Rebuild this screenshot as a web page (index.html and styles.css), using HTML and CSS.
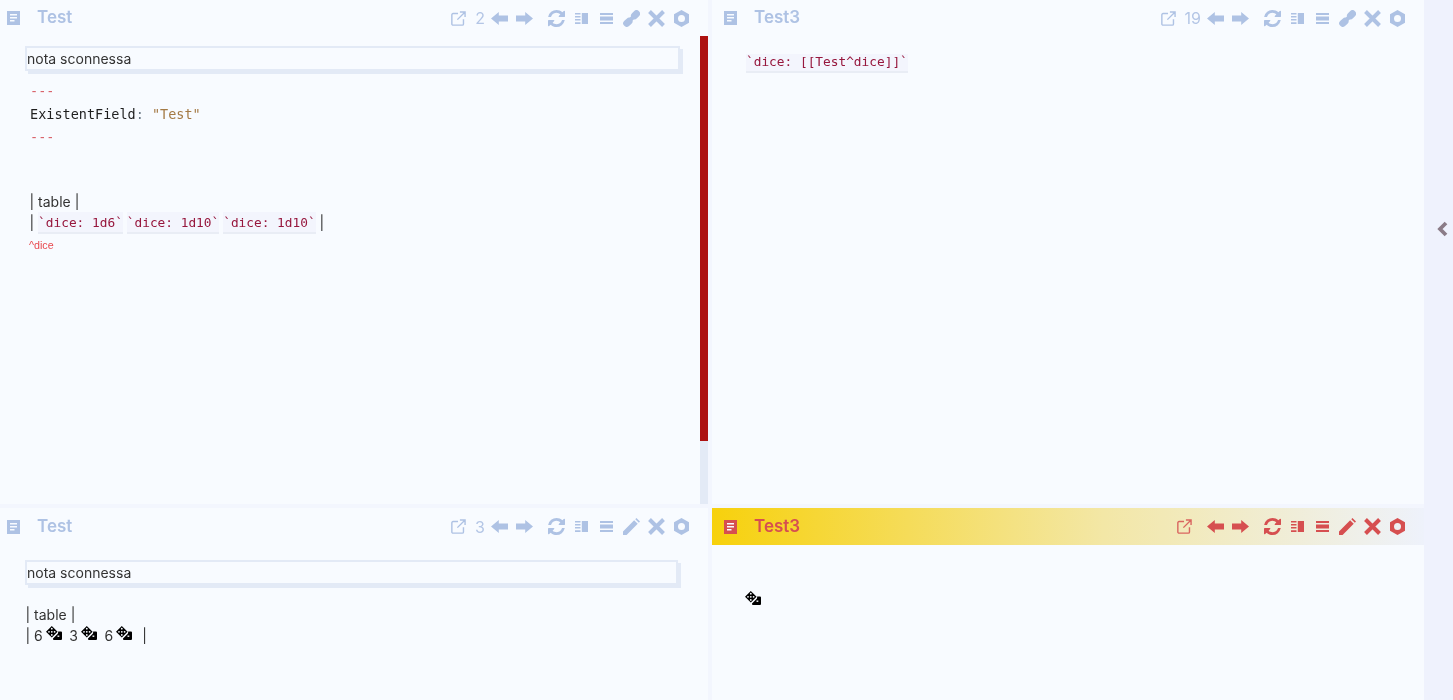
FILE: index.html
```html
<!DOCTYPE html>
<html lang="it">
<head>
<meta charset="utf-8">
<title>Test</title>
<link rel="stylesheet" href="styles.css">
</head>
<body>
<svg class="defs" aria-hidden="true">
  <symbol id="i-doc" viewBox="0 0 13 14">
    <path fill="currentColor" d="M0 0h13v14H0z"/>
    <path class="doc-lines" d="M3 3h7v1.4H3zM3 6h7v1.4H3zM3 9h4.500v1.400H3z"/>
  </symbol>
  <symbol id="i-ext" viewBox="0 0 16 16">
    <path fill="none" stroke="currentColor" stroke-width="1.500" d="M7.500 2.700H2.200a1.300 1.300 0 0 0-1.300 1.300v9.800a1.300 1.300 0 0 0 1.300 1.300H12a1.300 1.300 0 0 0 1.300-1.300V8.800M9.500 1H15v5.500M15 1 6.800 9.200"/>
  </symbol>
  <symbol id="i-left" viewBox="0 0 17 13"><path fill="currentColor" d="M0 6.500 7.800 0v3.500H17v6H7.800V13z"/></symbol>
  <symbol id="i-right" viewBox="0 0 17 13"><path fill="currentColor" d="M17 6.500 9.200 0v3.500H0v6h9.200V13z"/></symbol>
  <symbol id="i-refresh" viewBox="128 128 1536 1536">
    <path fill="currentColor" d="M1639 1056q0 5-1 7-64 268-268 434.500t-478 166.500q-146 0-282.500-55t-243.500-157l-129 129q-19 19-45 19t-45-19-19-45v-448q0-26 19-45t45-19h448q26 0 45 19t19 45-19 45l-137 137q71 66 161 102t187 36q134 0 250-65t186-179q11-17 53-117 8-23 30-23h192q13 0 22.500 9.500t9.500 22.500zm25-800v448q0 26-19 45t-45 19h-448q-26 0-45-19t-19-45 19-45l138-138q-148-137-349-137-134 0-250 65t-186 179q-11 17-53 117-8 23-30 23h-199q-13 0-22.500-9.500t-9.500-22.500v-7q65-268 270-434.500t480-166.500q146 0 284 55.500t245 156.500l130-129q19-19 45-19t45 19 19 45z"/>
  </symbol>
  <symbol id="i-cols" viewBox="0 0 13 11">
    <path fill="currentColor" d="M0 0h5.500v1.600H0zM0 3h5.500v1.600H0zM0 6h5.500v1.600H0zM0 9.200h5.500V11H0zM6.800 0H13v11H6.800z"/>
  </symbol>
  <symbol id="i-rows" viewBox="0 0 13 11">
    <path fill="currentColor" d="M0 0h13v2H0zM0 3.400h13v4H0zM0 9h13v2H0z"/>
  </symbol>
  <symbol id="i-link" viewBox="0 0 17 17">
    <path fill="none" stroke="currentColor" stroke-width="7" stroke-linecap="round" d="M3.700 13.300 6 11.300M11.500 5.700 13.500 3.700"/>
    <path fill="none" stroke="currentColor" stroke-width="4" d="M5 12 12.500 5"/>
  </symbol>
  <symbol id="i-pen" viewBox="0 0 18 18">
    <path fill="currentColor" d="M0 18v-3.800L11.800 2.400l3.800 3.800L3.800 18zM13 1.200 14.200 0 18 3.800l-1.200 1.200z"/>
  </symbol>
  <symbol id="i-x" viewBox="0 0 17 17">
    <path fill="none" stroke="currentColor" stroke-width="4" d="M1.500 1.500 15.500 15.500M15.500 1.500 1.500 15.500"/>
  </symbol>
  <symbol id="i-hex" viewBox="0 0 15 17">
    <path fill="currentColor" fill-rule="evenodd" d="M7.500 0 15 4.200v8.600L7.500 17 0 12.800V4.200zM7.500 5a3.500 3.500 0 1 0 0 7 3.500 3.500 0 0 0 0-7z"/>
  </symbol>
  <symbol id="i-dice" viewBox="0 0 16 14">
    <path fill="#000" fill-rule="evenodd" d="M5.800 0 11.600 5.800 5.800 11.600 0 5.800zM5.800 1.800a.9.9 0 1 0 0 1.800.9.9 0 0 0 0-1.800zM3 4.900a.9.9 0 1 0 0 1.800.9.9 0 0 0 0-1.800zM5.800 4.900a.9.9 0 1 0 0 1.800.9.9 0 0 0 0-1.800zM8.600 4.900a.9.9 0 1 0 0 1.800.9.9 0 0 0 0-1.800zM5.800 8a.9.9 0 1 0 0 1.800.9.9 0 0 0 0-1.800z"/>
    <path fill="#000" fill-rule="evenodd" d="M12.200 5.500H15a1 1 0 0 1 1 1V13a1 1 0 0 1-1 1H8a1 1 0 0 1-1-1v-.600L12 7.500z"/>
    <path fill="#f9fbff" d="M11.500 9.500h1.800v1.400h-1.800z"/>
  </symbol>
</svg>

<div class="app">
  <main class="panes">

    <section class="pane pane-short">
      <header class="head head-short">
        <svg class="doc"><use href="#i-doc"/></svg>
        <span class="title">Test</span>
        <div class="tools">
          <svg class="ext"><use href="#i-ext"/></svg>
          <span class="count">2</span>
          <span class="slot"><svg class="ic-arrow"><use href="#i-left"/></svg></span>
          <span class="slot"><svg class="ic-arrow"><use href="#i-right"/></svg></span>
          <span class="slot slot-gap"><svg class="ic-refresh"><use href="#i-refresh"/></svg></span>
          <span class="slot"><svg class="ic-bars"><use href="#i-cols"/></svg></span>
          <span class="slot"><svg class="ic-bars"><use href="#i-rows"/></svg></span>
          <span class="slot"><svg class="ic-big"><use href="#i-link"/></svg></span>
          <span class="slot"><svg class="ic-big"><use href="#i-x"/></svg></span>
          <span class="slot"><svg class="ic-hex"><use href="#i-hex"/></svg></span>
        </div>
      </header>
      <div class="body body-scroll">
        <div class="content">
          <div class="embed embed-top">nota sconnessa</div>
          <div class="front">
            <div class="mono-line red">---</div>
            <div class="mono-line">ExistentField<span class="colon">:</span> <span class="str">"Test"</span></div>
            <div class="mono-line red">---</div>
          </div>
          <div class="md-table md-table-top">
            <div class="tline">| table |</div>
            <div class="tline">| <code class="code">`dice: 1d6`</code> <code class="code">`dice: 1d10`</code> <code class="code">`dice: 1d10`</code> |</div>
          </div>
          <div class="blockid">^dice</div>
        </div>
        <div class="scrollbar"><div class="thumb"></div></div>
      </div>
    </section>

    <section class="pane pane-short">
      <header class="head head-short head-right">
        <svg class="doc"><use href="#i-doc"/></svg>
        <span class="title">Test3</span>
        <div class="tools">
          <svg class="ext"><use href="#i-ext"/></svg>
          <span class="count">19</span>
          <span class="slot"><svg class="ic-arrow"><use href="#i-left"/></svg></span>
          <span class="slot"><svg class="ic-arrow"><use href="#i-right"/></svg></span>
          <span class="slot slot-gap"><svg class="ic-refresh"><use href="#i-refresh"/></svg></span>
          <span class="slot"><svg class="ic-bars"><use href="#i-cols"/></svg></span>
          <span class="slot"><svg class="ic-bars"><use href="#i-rows"/></svg></span>
          <span class="slot"><svg class="ic-big"><use href="#i-link"/></svg></span>
          <span class="slot"><svg class="ic-big"><use href="#i-x"/></svg></span>
          <span class="slot"><svg class="ic-hex"><use href="#i-hex"/></svg></span>
        </div>
      </header>
      <div class="body body-right">
        <code class="code code-solo">`dice: [[Test^dice]]`</code>
      </div>
    </section>

    <section class="pane">
      <header class="head">
        <svg class="doc"><use href="#i-doc"/></svg>
        <span class="title">Test</span>
        <div class="tools">
          <svg class="ext"><use href="#i-ext"/></svg>
          <span class="count">3</span>
          <span class="slot"><svg class="ic-arrow"><use href="#i-left"/></svg></span>
          <span class="slot"><svg class="ic-arrow"><use href="#i-right"/></svg></span>
          <span class="slot slot-gap"><svg class="ic-refresh"><use href="#i-refresh"/></svg></span>
          <span class="slot"><svg class="ic-bars"><use href="#i-cols"/></svg></span>
          <span class="slot"><svg class="ic-bars"><use href="#i-rows"/></svg></span>
          <span class="slot"><svg class="ic-big"><use href="#i-pen"/></svg></span>
          <span class="slot"><svg class="ic-big"><use href="#i-x"/></svg></span>
          <span class="slot"><svg class="ic-hex"><use href="#i-hex"/></svg></span>
        </div>
      </header>
      <div class="body">
        <div class="embed embed-bottom">nota sconnessa</div>
        <div class="md-table md-table-bottom">
          <div class="tline">| table |</div>
          <div class="tline">| 6 <svg class="dice"><use href="#i-dice"/></svg> 3 <svg class="dice"><use href="#i-dice"/></svg> 6 <svg class="dice dice-end"><use href="#i-dice"/></svg> |</div>
        </div>
      </div>
    </section>

    <section class="pane pane-active">
      <header class="head head-right head-active">
        <svg class="doc"><use href="#i-doc"/></svg>
        <span class="title">Test3</span>
        <div class="tools">
          <svg class="ext"><use href="#i-ext"/></svg>
          <span class="slot"><svg class="ic-arrow"><use href="#i-left"/></svg></span>
          <span class="slot"><svg class="ic-arrow"><use href="#i-right"/></svg></span>
          <span class="slot slot-gap"><svg class="ic-refresh"><use href="#i-refresh"/></svg></span>
          <span class="slot"><svg class="ic-bars"><use href="#i-cols"/></svg></span>
          <span class="slot"><svg class="ic-bars"><use href="#i-rows"/></svg></span>
          <span class="slot"><svg class="ic-big"><use href="#i-pen"/></svg></span>
          <span class="slot"><svg class="ic-big"><use href="#i-x"/></svg></span>
          <span class="slot"><svg class="ic-hex"><use href="#i-hex"/></svg></span>
        </div>
      </header>
      <div class="body body-dice">
        <svg class="dice dice-solo"><use href="#i-dice"/></svg>
      </div>
    </section>

  </main>
  <aside class="side">
    <svg class="chev" viewBox="0 0 11 16"><path d="M9 2 3 8l6 6" fill="none" stroke="currentColor" stroke-width="3.800"/></svg>
  </aside>
</div>
</body>
</html>
```
FILE: styles.css
```css
* { box-sizing: border-box; }
html, body { margin: 0; height: 100%; overflow: hidden; }
body {
  font-family: Inter, "Liberation Sans", sans-serif;
  font-size: 14px;
  color: #222;
  background: #f3f6fe;
}
.defs { display: none; }
.doc-lines { fill: #f8fbff; }

.app { display: flex; width: 1453px; height: 700px; }
.panes {
  width: 1424px;
  display: grid;
  grid-template-columns: 708px 712px;
  grid-template-rows: 504px 192px;
  gap: 4px;
  will-change: transform;
}
.side {
  width: 29px;
  background: #eff2fd;
  padding: 221px 0 0 13px;
}
.chev { display: block; width: 11px; height: 16px; color: #8b7c88; }

.pane { background: #f8fbff; display: flex; flex-direction: column; min-width: 0; }

.head {
  height: 37px;
  flex: none;
  display: flex;
  align-items: center;
  padding-left: 7px;
  color: #aec2e4;
}
.head-short { height: 36px; }
.head-right { padding-left: 12px; }
.head-active {
  color: #d64f50;
  background: linear-gradient(90deg, #f7d10c 0%, #f3e7a6 55%, #eef2fb 100%);
}
.head-active .doc-lines { fill: #f7d10c; }
.doc { width: 13px; height: 14px; flex: none; }
.title {
  margin: 0 0 2px 17px;
  font-size: 17px;
  font-weight: 600;
  line-height: 20px;
}
.tools {
  margin-left: auto;
  display: flex;
  align-items: center;
  padding-right: 14px;
}
.ext { width: 15px; height: 15px; flex: none; margin-right: 9px; }
.head-active .ext { margin-right: 11px; opacity: .85; }
.count { font-size: 16px; color: #b4c6e6; margin-right: 2px; line-height: 20px; }
.slot { width: 25px; height: 20px; display: flex; align-items: center; justify-content: center; flex: none; }
.slot-gap { margin-left: 7px; }
.ic-arrow { width: 17px; height: 13px; }
.ic-refresh { width: 17px; height: 17px; }
.ic-bars { width: 13px; height: 11px; }
.ic-big { width: 17px; height: 17px; }
.ic-hex { width: 15px; height: 17px; }

.body { flex: 1; min-height: 0; }
.body-scroll { display: flex; }
.content { width: 700px; flex: none; }
.scrollbar { width: 8px; flex: none; background: #e3eaf6; }
.thumb { height: 405px; background: #ad1111; }

.embed {
  margin-left: 25px;
  width: 655px;
  height: 25px;
  border: 2px solid #e3eaf6;
  line-height: 21px;
  box-shadow: 3px 3px 0 #e3eaf6;
  color: #333;
  font-size: 14px;
}
.embed-top { margin-top: 10px; }
.embed-bottom { margin-top: 15px; width: 653px; }

.front { margin: 9px 0 0 30px; }
.mono-line {
  font-family: "DejaVu Sans Mono", "Liberation Mono", monospace;
  font-size: 13.500px;
  line-height: 23px;
  color: #1f1f1f;
}
.red { color: #d9656c; }
.colon { color: #6d7a86; }
.str { color: #a47a45; }

.md-table { font-size: 14px; }
.md-table-top { margin: 42px 0 0 29.500px; }
.md-table-bottom { margin: 19px 0 0 25.500px; }
.tline { line-height: 21px; height: 21px; white-space: pre; color: #333; }

.code {
  font-family: "DejaVu Sans Mono", "Liberation Mono", monospace;
  font-size: 12.800px;
  color: #97173d;
  background: #f3f5fd;
  border-bottom: 2px solid #e9edf5;
  padding: 3px 0 2px;
  vertical-align: 1px;
}
.blockid {
  margin: 4px 0 0 29px;
  font-family: "Liberation Sans", sans-serif;
  font-size: 10.700px;
  line-height: 16px;
  color: #e8494f;
}

.body-right { padding: 18px 0 0 34px; }
.code-solo { display: inline-block; line-height: 15px; padding: 0 0 2px; vertical-align: top; }

.dice { width: 16px; height: 14px; display: inline-block; vertical-align: 1px; margin: 0 3.700px 0 -1px; }
.dice-end { margin-right: 6px; }
.body-dice { padding: 46px 0 0 33px; }
.dice-solo { display: block; margin: 0; }
```
